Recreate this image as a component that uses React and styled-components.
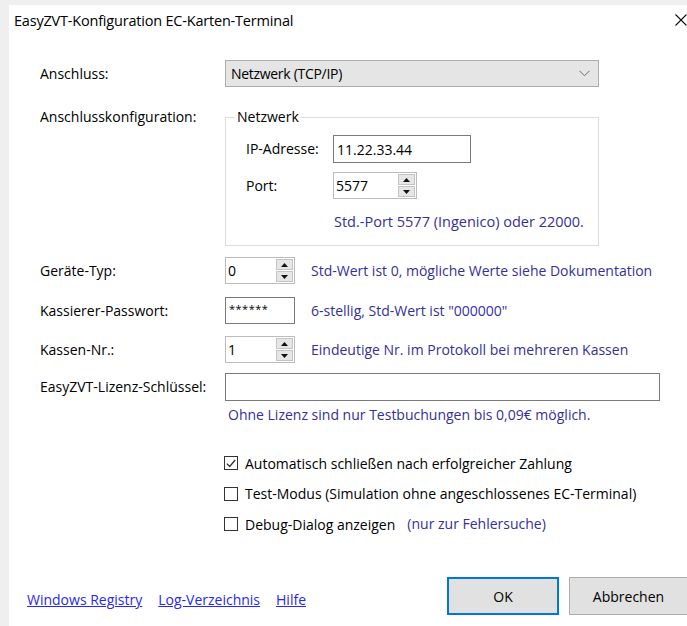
import React from 'react';
import styled, { createGlobalStyle } from 'styled-components';

const Global = createGlobalStyle`
  html, body { margin: 0; padding: 0; background: #efefef; }
  body { font-family: "Open Sans", "Noto Sans", sans-serif; color: #000; }
`;

const Frame = styled.div`
  height: 626px;
  box-sizing: border-box;
  padding: 5px 0 0 9px;
  background: #efefef;
  overflow: hidden;
  display: flex;
`;

const Window = styled.div`
  flex: 0 0 684px;
  background: #fff;
  display: flex;
  flex-direction: column;
`;

const TitleBar = styled.div`
  height: 30px;
  display: flex;
  align-items: center;
  justify-content: space-between;
  padding: 0 6px 0 5px;
`;

const Title = styled.span`
  font-size: 14.5px;
  letter-spacing: -0.2px;
`;

const Body = styled.div`
  flex: 1;
  display: flex;
  flex-direction: column;
`;

const Form = styled.div`
  padding: 25px 0 0 31px;
  display: flex;
  flex-direction: column;
`;

const Row = styled.div`
  display: grid;
  grid-template-columns: 185px auto;
  align-items: ${p => (p.$top ? 'start' : 'center')};
  margin-top: ${p => p.$mt || 0}px;
`;

const Label = styled.span`
  font-size: 14px;
  line-height: 20px;
`;

const Hint = styled.span`
  font-size: 14px;
  line-height: 20px;
  color: #34309a;
  margin-left: ${p => p.$ml || 0}px;
`;

const PortHint = styled(Hint)`
  grid-column: 2;
  margin-top: 4px;
  margin-left: 1px;
  font-size: 14.5px;
`;

const Field = styled.div`
  display: flex;
  align-items: center;
  gap: 16px;
`;

const Combo = styled.div`
  width: 374px;
  height: 27px;
  box-sizing: border-box;
  border: 1px solid #adadad;
  background: #e5e5e5;
  display: flex;
  align-items: center;
  justify-content: space-between;
  padding: 0 8px 0 5px;
  font-size: 14px;
  letter-spacing: -0.3px;
`;

const Group = styled.fieldset`
  width: 374px;
  box-sizing: border-box;
  margin: 0;
  padding: 0;
  border: 1px solid #dcdcdc;
`;

const Legend = styled.legend`
  margin-left: 9px;
  padding: 0 2px;
  font-size: 14px;
  line-height: 20px;
`;

const GroupGrid = styled.div`
  display: grid;
  grid-template-columns: 87px auto;
  align-items: center;
  row-gap: 9px;
  padding: 8px 0 13px 20px;
`;

const TextBox = styled.div`
  width: ${p => p.$w}px;
  height: ${p => p.$h || 28}px;
  box-sizing: border-box;
  border: 1px solid #7a7a7a;
  background: #fff;
  display: flex;
  align-items: center;
  padding-left: 3px;
  font-size: 14px;
`;

const Spin = styled.div`
  width: ${p => p.$w}px;
  height: 27px;
  box-sizing: border-box;
  border: 1px solid #bcbcbc;
  background: #fff;
  display: flex;
  align-items: center;
  padding: 0 1px 0 2px;
  font-size: 14px;
`;

const SpinValue = styled.span`
  flex: 1;
`;

const SpinButtons = styled.div`
  display: flex;
  flex-direction: column;
  gap: 1px;
`;

const SpinBtn = styled.div`
  width: 17px;
  height: 11px;
  box-sizing: border-box;
  background: #e6e6e6;
  border: 1px solid #c4c4c4;
  display: flex;
  align-items: center;
  justify-content: center;
`;

const Password = styled.span`
  font-size: 11px;
  letter-spacing: 0.5px;
  margin-top: -5px;
`;

const Note = styled(Hint)`
  display: block;
  margin-top: 4px;
  padding-left: 3px;
`;

const Checks = styled.div`
  display: flex;
  flex-direction: column;
  margin: 23px 0 0 184px;
`;

const CheckRow = styled.label`
  display: flex;
  align-items: center;
  gap: 7px;
  height: 30.5px;
  font-size: 14px;
`;

const Box = styled.span`
  width: 14px;
  height: 14px;
  box-sizing: border-box;
  border: 1px solid #333;
  background: #fff;
  display: flex;
  align-items: center;
  justify-content: center;
`;

const Footer = styled.div`
  margin-top: auto;
  display: flex;
  align-items: center;
  justify-content: space-between;
  padding: 0 5px 11px 18px;
`;

const Links = styled.div`
  display: flex;
  gap: 16px;
  margin-top: 6px;
`;

const Link = styled.a`
  font-size: 14px;
  color: #2727f5;
  text-decoration: underline;
  cursor: pointer;
`;

const Buttons = styled.div`
  display: flex;
  gap: 10px;
`;

const Button = styled.button`
  width: ${p => p.$w}px;
  height: 38px;
  box-sizing: border-box;
  background: #e1e1e1;
  border: ${p => (p.$default ? '2px solid #0078d7' : '1px solid #adadad')};
  font-family: inherit;
  font-size: 14px;
  color: #000;
  padding: 0;
`;

const Chevron = () => (
  <svg width="11" height="7" viewBox="0 0 11 7">
    <path d="M0.5 0.8 L5.5 5.8 L10.5 0.8" fill="none" stroke="#6d6d6d" strokeWidth="1" />
  </svg>
);

const CloseIcon = () => (
  <svg width="12" height="12" viewBox="0 0 12 12">
    <path d="M0.5 0.5 L11.5 11.5 M11.5 0.5 L0.5 11.5" stroke="#111" strokeWidth="1.1" />
  </svg>
);

const Tri = ({ down }) => (
  <svg width="7" height="4" viewBox="0 0 7 4">
    <path d={down ? 'M0 0 H7 L3.5 4 Z' : 'M0 4 H7 L3.5 0 Z'} fill="#111" />
  </svg>
);

const Tick = () => (
  <svg width="10" height="9" viewBox="0 0 10 9">
    <path d="M0.8 4.6 L3.7 7.5 L9.2 1" fill="none" stroke="#333" strokeWidth="1.3" />
  </svg>
);

const NumberBox = ({ value, width }) => (
  <Spin $w={width}>
    <SpinValue>{value}</SpinValue>
    <SpinButtons>
      <SpinBtn><Tri /></SpinBtn>
      <SpinBtn><Tri down /></SpinBtn>
    </SpinButtons>
  </Spin>
);

const Check = ({ checked, children }) => (
  <CheckRow>
    <Box>{checked && <Tick />}</Box>
    {children}
  </CheckRow>
);

export default function App() {
  return (
    <>
      <Global />
      <Frame>
        <Window>
          <TitleBar>
            <Title>EasyZVT-Konfiguration EC-Karten-Terminal</Title>
            <CloseIcon />
          </TitleBar>
          <Body>
            <Form>
              <Row>
                <Label>Anschluss:</Label>
                <Combo>
                  <span>Netzwerk (TCP/IP)</span>
                  <Chevron />
                </Combo>
              </Row>

              <Row $top $mt={20}>
                <Label>Anschlusskonfiguration:</Label>
                <Group>
                  <Legend>Netzwerk</Legend>
                  <GroupGrid>
                    <Label>IP-Adresse:</Label>
                    <TextBox $w={138}>11.22.33.44</TextBox>
                    <Label>Port:</Label>
                    <NumberBox value="5577" width={84} />
                    <PortHint>Std.-Port 5577 (Ingenico) oder 22000.</PortHint>
                  </GroupGrid>
                </Group>
              </Row>

              <Row $mt={11}>
                <Label>Geräte-Typ:</Label>
                <Field>
                  <NumberBox value="0" width={70} />
                  <Hint>Std-Wert ist 0, mögliche Werte siehe Dokumentation</Hint>
                </Field>
              </Row>

              <Row $mt={13}>
                <Label>Kassierer-Passwort:</Label>
                <Field>
                  <TextBox $w={70} $h={27}><Password>******</Password></TextBox>
                  <Hint>6-stellig, Std-Wert ist "000000"</Hint>
                </Field>
              </Row>

              <Row $mt={12}>
                <Label>Kassen-Nr.:</Label>
                <Field>
                  <NumberBox value="1" width={70} />
                  <Hint>Eindeutige Nr. im Protokoll bei mehreren Kassen</Hint>
                </Field>
              </Row>

              <Row $mt={10}>
                <Label>EasyZVT-Lizenz-Schlüssel:</Label>
                <TextBox $w={435} />
              </Row>
              <Row>
                <span />
                <Note>Ohne Lizenz sind nur Testbuchungen bis 0,09€ möglich.</Note>
              </Row>

              <Checks>
                <Check checked>Automatisch schließen nach erfolgreicher Zahlung</Check>
                <Check>Test-Modus (Simulation ohne angeschlossenes EC-Terminal)</Check>
                <Check>
                  Debug-Dialog anzeigen
                  <Hint $ml={5}>(nur zur Fehlersuche)</Hint>
                </Check>
              </Checks>
            </Form>

            <Footer>
              <Links>
                <Link>Windows Registry</Link>
                <Link>Log-Verzeichnis</Link>
                <Link>Hilfe</Link>
              </Links>
              <Buttons>
                <Button $default $w={112}>OK</Button>
                <Button $w={119}>Abbrechen</Button>
              </Buttons>
            </Footer>
          </Body>
        </Window>
      </Frame>
    </>
  );
}
